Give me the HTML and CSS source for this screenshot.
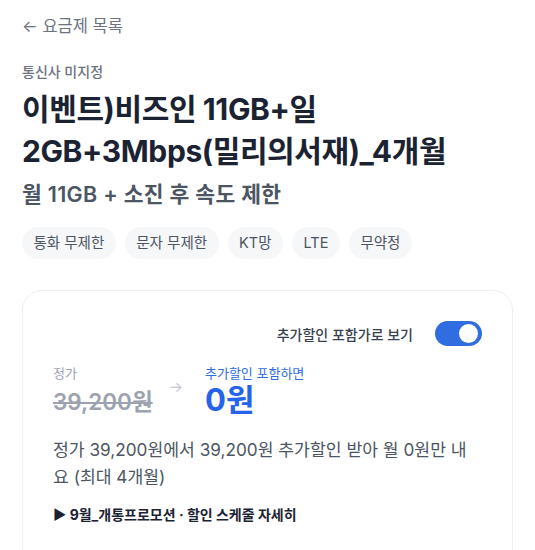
FILE: index.html
```html
<!DOCTYPE html>
<html lang="ko">
<head>
<meta charset="utf-8">
<link rel="stylesheet" href="styles.css">
</head>
<body>
<div class="page">
  <a class="back">← 요금제 목록</a>
  <div class="carrier">통신사 미지정</div>
  <h1 class="title">이벤트)비즈인 11GB+일<br>2GB+3Mbps(밀리의서재)_4개월</h1>
  <div class="subtitle">월 11GB + 소진 후 속도 제한</div>
  <div class="tags">
    <span class="tag">통화 무제한</span>
    <span class="tag">문자 무제한</span>
    <span class="tag">KT망</span>
    <span class="tag">LTE</span>
    <span class="tag">무약정</span>
  </div>
  <div class="card">
    <div class="toggle-row">
      <span class="toggle-label">추가할인 포함가로 보기</span>
      <span class="toggle"><span class="knob"></span></span>
    </div>
    <div class="prices">
      <div class="price-col">
        <div class="price-label">정가</div>
        <div class="price-old">39,200원</div>
      </div>
      <div class="arrow">→</div>
      <div class="price-col">
        <div class="price-label blue">추가할인 포함하면</div>
        <div class="price-new">0원</div>
      </div>
    </div>
    <p class="desc">정가 39,200원에서 39,200원 추가할인 받아 월 0원만 내요 (최대 4개월)</p>
    <div class="promo">▶ 9월_개통프로모션 · 할인 스케줄 자세히</div>
  </div>
</div>
</body>
</html>
```
FILE: styles.css
```css
* { box-sizing: border-box; }
html, body { margin: 0; padding: 0; background: #fff; }
body {
  font-family: Inter, "Noto Sans CJK KR", sans-serif;
  color: #1b2333;
}
.page { padding: 12px 22px 0 22px; }
.back {
  display: block;
  font-size: 16.5px;
  line-height: 28px;
  color: #6b7280;
  text-decoration: none;
}
.carrier {
  margin-top: 22px;
  font-size: 14px;
  font-weight: 500;
  line-height: 20px;
  color: #6b7280;
}
.title {
  margin: 6px 0 0 0;
  font-size: 30px;
  font-weight: 700;
  line-height: 42px;
  letter-spacing: -0.4px;
  color: #1b2333;
}
.subtitle {
  margin-top: 8px;
  font-size: 21.5px;
  font-weight: 600;
  line-height: 28px;
  color: #4b5563;
  letter-spacing: 0.3px;
}
.tags {
  display: flex;
  gap: 9px;
  margin-top: 19px;
}
.tag {
  background: #f6f7f8;
  border-radius: 16px;
  padding: 0 11.5px;
  height: 32px;
  line-height: 32px;
  font-size: 14.5px;
  color: #4b5563;
}
.card {
  margin-top: 31px;
  border: 1px solid #eceef1;
  border-radius: 20px;
  padding: 30px 30px 40px 30px;
  height: 300px;
}
.toggle-row {
  display: flex;
  justify-content: flex-end;
  align-items: center;
  gap: 22px;
}
.toggle-label {
  font-size: 14px;
  font-weight: 500;
  color: #374151;
}
.toggle {
  width: 47px;
  height: 25px;
  border-radius: 13px;
  background: #2f6de1;
  display: flex;
  align-items: center;
  justify-content: flex-end;
  padding-right: 4px;
}
.knob {
  width: 19px;
  height: 19px;
  border-radius: 50%;
  background: #fff;
}
.prices {
  display: flex;
  align-items: flex-start;
  margin-top: 17px;
}
.price-label {
  font-size: 13px;
  line-height: 20px;
  color: #9ca3af;
}
.price-label.blue { color: #2f6de1; }
.price-old {
  margin-top: 3px;
  font-size: 22.5px;
  font-weight: 600;
  line-height: 32px;
  color: #9ca3af;
  text-decoration: line-through;
}
.arrow {
  margin: 14px 22px 0 16px;
  font-size: 15px;
  color: #c4c8ce;
}
.price-new {
  margin-top: 0;
  font-size: 31px;
  font-weight: 700;
  line-height: 34px;
  color: #2563eb;
}
.desc {
  margin: 18px 0 0 0;
  max-width: 416px;
  font-size: 17.2px;
  line-height: 27px;
  color: #4b5563;
}
.promo {
  margin-top: 14px;
  font-size: 14px;
  font-weight: 700;
  color: #1b2333;
}
```
